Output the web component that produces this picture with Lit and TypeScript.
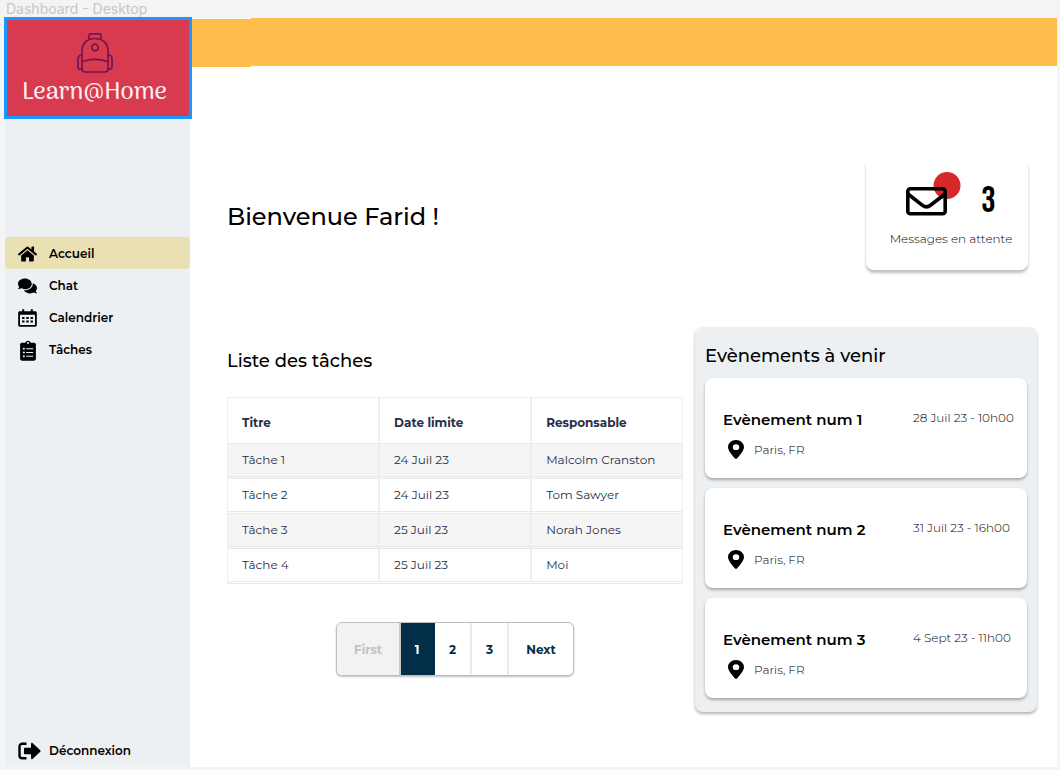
import { LitElement, html, css, svg } from "lit";
import { customElement, state } from "lit/decorators.js";
import { classMap } from "lit/directives/class-map.js";

const icons = {
  home: svg`<svg class="icon" viewBox="0 0 576 512" width="19" height="18" aria-hidden="true"><path d="M280.37 148.26L96 300.11V464a16 16 0 0 0 16 16l112.06-.29a16 16 0 0 0 15.92-16V368a16 16 0 0 1 16-16h64a16 16 0 0 1 16 16v95.64a16 16 0 0 0 16 16.05L464 480a16 16 0 0 0 16-16V300L295.67 148.26a12.19 12.19 0 0 0-15.3 0zM571.6 251.47L488 182.56V44.05a12 12 0 0 0-12-12h-56a12 12 0 0 0-12 12v72.61L318.47 43a48 48 0 0 0-61 0L4.34 251.47a12 12 0 0 0-1.6 16.9l25.5 31A12 12 0 0 0 45.15 301l235.22-193.74a12.19 12.19 0 0 1 15.3 0L530.9 301a12 12 0 0 0 16.9-1.6l25.5-31a12 12 0 0 0-1.7-16.93z"/></svg>`,
  chat: svg`<svg class="icon" viewBox="0 0 576 512" width="19" height="18" aria-hidden="true"><path d="M416 192c0-88.4-93.1-160-208-160S0 103.6 0 192c0 34.3 14.1 65.9 38 92-13.4 30.2-35.5 54.2-35.8 54.5-2.2 2.3-2.8 5.7-1.5 8.7S4.8 352 8 352c36.6 0 66.9-12.3 88.7-25 32.2 15.7 70.3 25 111.3 25 114.9 0 208-71.6 208-160zm122 220c23.9-26 38-57.7 38-92 0-66.9-53.5-124.2-129.3-148.1.9 6.6 1.3 13.3 1.3 20.1 0 105.9-107.7 192-240 192-10.8 0-21.3-.8-31.7-1.9C207.8 439.6 281.8 480 368 480c41 0 79.1-9.2 111.3-25 21.8 12.7 52.1 25 88.7 25 3.2 0 6.1-1.9 7.3-4.8 1.3-2.9.7-6.3-1.5-8.7-.3-.3-22.4-24.2-35.8-54.5z"/></svg>`,
  calendar: svg`<svg class="icon" viewBox="0 0 19 18" width="19" height="18" aria-hidden="true"><path fill-rule="evenodd" d="M4.2.3h2v1.9h6.6V.3h2v1.9h2.4c.9 0 1.6.7 1.6 1.5v12.4c0 .9-.7 1.6-1.6 1.6H1.8c-.9 0-1.6-.7-1.6-1.6V3.7c0-.8.7-1.5 1.6-1.5h2.4zM2 5.8v10.1h15V5.8z"/><path d="M4.1 8h2.4v2H4.1zM8.3 8h2.4v2H8.3zM12.5 8h2.4v2h-2.4zM4.1 11.6h2.4v2H4.1zM8.3 11.6h2.4v2H8.3zM12.5 11.6h2.4v2h-2.4z"/></svg>`,
  tasks: svg`<svg class="icon" viewBox="0 0 16 21" width="16" height="21" aria-hidden="true"><path fill-rule="evenodd" d="M2 2.7h3.3a2.8 2.8 0 0 1 5.4 0H14c1.1 0 1.9.8 1.9 1.9v14.2c0 1.1-.8 1.9-1.9 1.9H2C.9 20.7.1 19.9.1 18.8V4.6C.1 3.5.9 2.7 2 2.7zM8 2a1 1 0 1 0 0 2 1 1 0 0 0 0-2z"/><g fill="#edf1f4"><circle cx="3.9" cy="8.7" r="1"/><circle cx="3.9" cy="12.5" r="1"/><circle cx="3.9" cy="16.3" r="1"/><path d="M6.2 8.2h7v1h-7zM6.2 12h7v1h-7zM6.2 15.8h7v1h-7z"/></g></svg>`,
  logout: svg`<svg class="icon" viewBox="0 0 23 18" width="23" height="18" aria-hidden="true"><path d="M8.5 1.7H4.3A2.8 2.8 0 0 0 1.5 4.5v9a2.8 2.8 0 0 0 2.8 2.8h4.2" fill="none" stroke="#000" stroke-width="2.4"/><path d="M7 5.7h6V1.8c0-.9.9-1.3 1.5-.7l7.8 7.2c.4.4.4 1 0 1.4l-7.8 7.2c-.6.6-1.5.2-1.5-.7v-3.9H7c-.6 0-1-.4-1-1V6.7c0-.6.4-1 1-1z"/></svg>`,
  pin: svg`<svg class="pin" viewBox="0 0 384 512" width="16" height="19" preserveAspectRatio="none" aria-hidden="true"><path d="M215.7 499.2C267 435 384 279.4 384 192C384 86 298 0 192 0S0 86 0 192c0 87.4 117 243 168.3 307.2c12.3 15.3 35.1 15.3 47.4 0zM192 116a78 78 0 1 1 0 156 78 78 0 1 1 0-156z"/></svg>`,
};

const navItems = [
  { id: "accueil", label: "Accueil", icon: icons.home },
  { id: "chat", label: "Chat", icon: icons.chat },
  { id: "calendrier", label: "Calendrier", icon: icons.calendar },
  { id: "taches", label: "Tâches", icon: icons.tasks },
];

const tasks = [
  ["Tâche 1", "24 Juil 23", "Malcolm Cranston"],
  ["Tâche 2", "24 Juil 23", "Tom Sawyer"],
  ["Tâche 3", "25 Juil 23", "Norah Jones"],
  ["Tâche 4", "25 Juil 23", "Moi"],
];

const events = [
  { title: "Evènement num 1", date: "28 Juil 23 - 10h00", place: "Paris, FR" },
  { title: "Evènement num 2", date: "31 Juil 23 - 16h00", place: "Paris, FR" },
  { title: "Evènement num 3", date: "4 Sept 23 - 11h00", place: "Paris, FR" },
];

@customElement("app-root")
export class AppRoot extends LitElement {
  @state() private active = "accueil";
  @state() private page = 1;

  static styles = css`
    :host {
      display: flex;
      flex-direction: column;
      min-height: 100vh;
      box-sizing: border-box;
      padding: 0 3px 3px 5px;
      background: #f4f4f4;
      color: #000;
      font-family: Montserrat, Inter, "Open Sans", sans-serif;
      font-size: 12px;
      line-height: 16px;
    }
    * { box-sizing: border-box; }
    h1, h2, h3, p { margin: 0; }
    a { color: inherit; text-decoration: none; }
    button { font: inherit; cursor: pointer; }
    .frame-name {
      height: 18px;
      padding-left: 1px;
      font-family: Inter, sans-serif;
      font-size: 14px;
      line-height: 17px;
      color: #c6c6c6;
    }
    .frame {
      flex: 1;
      display: grid;
      grid-template-columns: 185px minmax(0, 1fr);
      background: #fff;
    }
    .sidebar {
      display: flex;
      flex-direction: column;
      background: #ecf0f3;
    }
    .logo {
      display: flex;
      flex-direction: column;
      align-items: center;
      height: 102px;
      margin: -1px -2px 0 -1px;
      padding: 13px 7px 0 0;
      border: 3px solid #1b96ff;
      background: #d83a50;
      color: #fdf0f3;
      z-index: 1;
      font-family: "Arima Madurai", Arima, Lato, sans-serif;
      font-size: 24px;
      line-height: 32px;
      font-weight: 500;
    }
    .logo svg { display: block; }
    .logo-name { margin-top: 4px; }
    .menu {
      display: flex;
      flex-direction: column;
      margin-top: 118px;
    }
    .item {
      display: flex;
      align-items: center;
      width: 100%;
      height: 32px;
      padding: 0 0 0 13px;
      border: 0;
      border-radius: 4px;
      background: none;
      font-size: 12px;
      font-weight: 600;
      text-align: left;
    }
    .menu .item { padding-top: 2px; }
    .item.active { background: #e9e1b4; }
    .glyph {
      display: flex;
      flex: none;
      justify-content: center;
      width: 19px;
      margin-right: 12px;
    }
    .icon { display: block; flex: none; }
    .glyph.start { justify-content: flex-start; }
    .logout { margin-top: auto; }
    .topbar {
      height: 49px;
      background:
        linear-gradient(#ffbe4b, #ffbe4b) 61px 0 / 100% 48px no-repeat,
        linear-gradient(#ffbe4b, #ffbe4b) 0 1px / 61px 48px no-repeat;
    }
    .content {
      display: flex;
      flex-direction: column;
      gap: 57px;
      padding: 91px 20px 52px 37px;
    }
    .welcome {
      display: flex;
      justify-content: space-between;
      align-items: center;
      padding-right: 9px;
    }
    h1 { padding-top: 6px; font-size: 24px; line-height: 32px; font-weight: 500; }
    h2 { font-size: 18px; line-height: 24px; font-weight: 500; }
    .messages {
      display: flex;
      flex-direction: column;
      align-items: center;
      width: 162px;
      height: 112px;
      padding: 14px 0 0 8px;
      border-radius: 8px;
      background: #fff;
      box-shadow: 0 3px 3px rgba(0, 0, 0, 0.25);
      font-weight: 300;
    }
    .count {
      display: flex;
      align-items: flex-start;
      gap: 20px;
      height: 59px;
      font-family: "Bebas Neue", "Roboto Condensed", Roboto, sans-serif;
      font-size: 36px;
      line-height: 60px;
      font-weight: 400;
    }
    .columns {
      display: grid;
      grid-template-columns: minmax(0, 4fr) minmax(0, 3fr);
      gap: 12px;
      align-items: start;
    }
    .tasks { padding-top: 22px; }
    table {
      width: 100%;
      margin-top: 24px;
      table-layout: fixed;
      border-spacing: 0;
      border: 1px solid #eee;
      border-bottom: 0;
      color: #27304a;
    }
    th, td {
      padding: 0 0 0 14px;
      text-align: left;
      border-right: 2px solid #eee;
    }
    th:last-child, td:last-child { border-right: 0; }
    th {
      width: 33.5%;
      height: 46px;
      padding-top: 4px;
      border-bottom: 1px solid #e9e9e9;
      font-weight: 700;
    }
    th:last-child { width: auto; }
    td { height: 35px; border-bottom: 3px double #e9e9e9; }
    tbody tr:nth-child(odd) td { background: #f5f5f5; }
    .pages {
      display: flex;
      width: max-content;
      height: 54px;
      margin: 38px auto 0;
      overflow: hidden;
      border: 1px solid #bfbfbf;
      border-radius: 6px;
      background: #fff;
      box-shadow: 0 1px 2px rgba(0, 0, 0, 0.25);
    }
    .page {
      min-width: 37px;
      padding: 2px 0 0;
      border: 0;
      border-right: 2px solid #eaeaea;
      background: none;
      color: #022e49;
      font-weight: 700;
    }
    .page:last-child { border-right: 0; }
    .page.edge { width: 64px; }
    .page:disabled { background: #f2f2f2; color: #c2c2c2; border-right-color: #c8c8c8; cursor: default; }
    .page.current { min-width: 34px; background: #022e49; color: #fff; border-right-color: #022e49; }
    .events {
      display: flex;
      flex-direction: column;
      gap: 10px;
      padding: 17px 10px 14px;
      border-radius: 8px;
      background: #ecf0f3;
      box-shadow: 0 2px 3px rgba(0, 0, 0, 0.3);
    }
    .event {
      display: grid;
      grid-template-columns: minmax(0, 1fr) 100px;
      align-content: start;
      height: 100px;
      padding: 32px 14px 0 18px;
      border-radius: 8px;
      background: #fff;
      box-shadow: 0 2px 3px rgba(0, 0, 0, 0.3);
      font-weight: 300;
      white-space: nowrap;
    }
    h3 { font-size: 15px; line-height: 20px; font-weight: 600; }
    .place {
      display: flex;
      align-items: center;
      gap: 10px;
      padding: 10px 0 0 5px;
    }
    .pin { display: block; }
  `;

  render() {
    return html`
      <div class="frame-name">Dashboard - Desktop</div>
      <div class="frame">
        <aside class="sidebar">
          <a class="logo" href="#accueil" aria-label="Learn@Home">
            <svg width="36" height="40" viewBox="0 0 36 40" fill="none" stroke="#74154f" stroke-width="1.7" stroke-linecap="round" stroke-linejoin="round" aria-hidden="true">
              <path d="M12 5.5V2.5A1.7 1.7 0 0 1 13.7.8h8.6A1.7 1.7 0 0 1 24 2.5v3"/>
              <path d="M5 36V18C5 10 10.5 5.500 18 5.500S31 10 31 18v18a3 3 0 0 1-3 3H8a3 3 0 0 1-3-3z"/>
              <circle cx="18" cy="14.5" r="3.3"/>
              <path d="M5 28.500c8-2.700 18-2.700 26 0M5 22c-2.500 0-4 1.800-4 4v8c0 1.500.8 2.200 2 2.200h2M31 22c2.500 0 4 1.800 4 4v8c0 1.500-.8 2.200-2 2.200h-2"/>
            </svg>
            <span class="logo-name">Learn@Home</span>
          </a>
          <nav class="menu" aria-label="Menu">
            ${navItems.map(
              (n) => html`<a
                class=${classMap({ item: true, active: this.active === n.id })}
                href="#${n.id}"
                @click=${() => (this.active = n.id)}
                ><span class="glyph">${n.icon}</span>${n.label}</a
              >`
            )}
          </nav>
          <button class="item logout" type="button">
            <span class="glyph start">${icons.logout}</span>Déconnexion
          </button>
        </aside>
        <main>
          <header class="topbar"></header>
          <div class="content">
            <section class="welcome">
              <h1>Bienvenue Farid !</h1>
              <a class="messages" href="#chat">
                <span class="count">
                  <svg width="55" height="46" viewBox="0 0 55 46" aria-hidden="true">
                    <circle cx="41" cy="13.5" r="13.5" fill="#d62828"/>
                    <g fill="none" stroke="#000" stroke-width="3.6" stroke-linejoin="round">
                      <rect x="1.8" y="16.8" width="37.4" height="25" rx="2.5"/>
                      <path d="M2 22l14.5 11.3c2.5 1.900 5.500 1.900 8 0L39 22"/>
                    </g>
                  </svg>
                  <span>3</span>
                </span>
                Messages en attente
              </a>
            </section>
            <div class="columns">
              <section class="tasks">
                <h2>Liste des tâches</h2>
                <table>
                  <thead>
                    <tr><th scope="col">Titre</th><th scope="col">Date limite</th><th scope="col">Responsable</th></tr>
                  </thead>
                  <tbody>
                    ${tasks.map((row) => html`<tr>${row.map((c) => html`<td>${c}</td>`)}</tr>`)}
                  </tbody>
                </table>
                <nav class="pages" aria-label="Pagination">
                  <button class="page edge" type="button" ?disabled=${this.page === 1} @click=${() => (this.page = 1)}>First</button>
                  ${[1, 2, 3].map(
                    (p) => html`<button
                      type="button"
                      class=${classMap({ page: true, current: this.page === p })}
                      @click=${() => (this.page = p)}
                    >${p}</button>`
                  )}
                  <button class="page edge" type="button" @click=${() => (this.page = Math.min(3, this.page + 1))}>Next</button>
                </nav>
              </section>
              <section class="events">
                <h2>Evènements à venir</h2>
                ${events.map(
                  (e) => html`<article class="event">
                    <h3>${e.title}</h3>
                    <time>${e.date}</time>
                    <p class="place">${icons.pin}${e.place}</p>
                  </article>`
                )}
              </section>
            </div>
          </div>
        </main>
      </div>
    `;
  }
}
